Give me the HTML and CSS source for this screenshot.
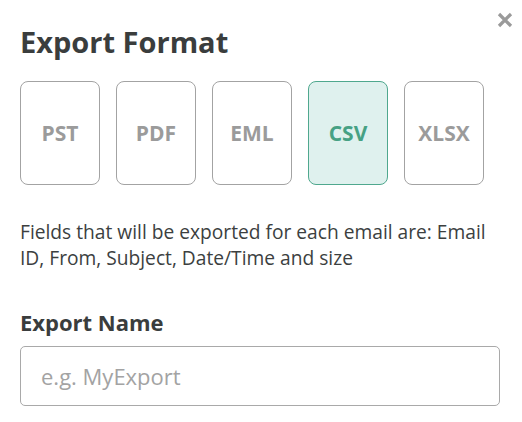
FILE: index.html
```html
<!DOCTYPE html>
<html lang="en">
<head>
    <meta charset="UTF-8">
    <meta name="viewport" content="width=device-width, initial-scale=1.0">
    <title>Export Format</title>
    <link rel="stylesheet" href="styles.css">
</head>
<body>
    <div class="modal">
        <button class="close-btn" aria-label="Close">
            <svg width="16" height="16" viewBox="0 0 16 16">
                <path d="M2 2 L14 14 M14 2 L2 14" stroke="#9a9a9a" stroke-width="3.2"/>
            </svg>
        </button>
        <h2>Export Format</h2>
        <div class="formats">
            <div class="format">PST</div>
            <div class="format">PDF</div>
            <div class="format">EML</div>
            <div class="format selected">CSV</div>
            <div class="format">XLSX</div>
        </div>
        <p class="fields-note">Fields that will be exported for each email are: Email ID, From, Subject, Date/Time and size</p>
        <label class="field-label" for="export-name">Export Name</label>
        <input type="text" id="export-name" class="text-input" placeholder="e.g. MyExport">
    </div>
</body>
</html>
```

FILE: styles.css
```css
body {
    margin: 0;
    background-color: #ffffff;
    font-family: 'Open Sans', 'Noto Sans', sans-serif;
    color: #3c4040;
}

.modal {
    position: relative;
    padding: 22px 22px 20px 20px;
}

.close-btn {
    position: absolute;
    top: 12px;
    right: 9px;
    padding: 0;
    border: none;
    background: none;
    cursor: pointer;
}

.close-btn svg {
    display: block;
}

h2 {
    margin: 0 0 19px 0;
    font-size: 29px;
    font-weight: 700;
    line-height: 40px;
    color: #3a3d3d;
}

.formats {
    display: flex;
    gap: 16px;
}

.format {
    width: 80px;
    height: 104px;
    box-sizing: border-box;
    border: 1px solid #a3a3a3;
    border-radius: 8px;
    display: flex;
    align-items: center;
    justify-content: center;
    font-size: 21px;
    font-weight: 700;
    color: #9b9b9b;
}

.format.selected {
    background-color: #dff1ee;
    border-color: #4fa88e;
    color: #46a184;
}

.fields-note {
    margin: 34px 0 0 0;
    font-size: 19.2px;
    line-height: 26px;
    color: #3c3f3f;
}

.field-label {
    display: block;
    margin-top: 37px;
    font-size: 22px;
    font-weight: 700;
    line-height: 28px;
    color: #3a3d3d;
}

.text-input {
    display: block;
    width: 100%;
    box-sizing: border-box;
    height: 60px;
    margin-top: 10px;
    padding: 0 20px;
    border: 1px solid #a9a9a9;
    border-radius: 5px;
    font-family: inherit;
    font-size: 22px;
    color: #3c3f3f;
    outline: none;
}

.text-input::placeholder {
    color: #a3a3a3;
}
```
